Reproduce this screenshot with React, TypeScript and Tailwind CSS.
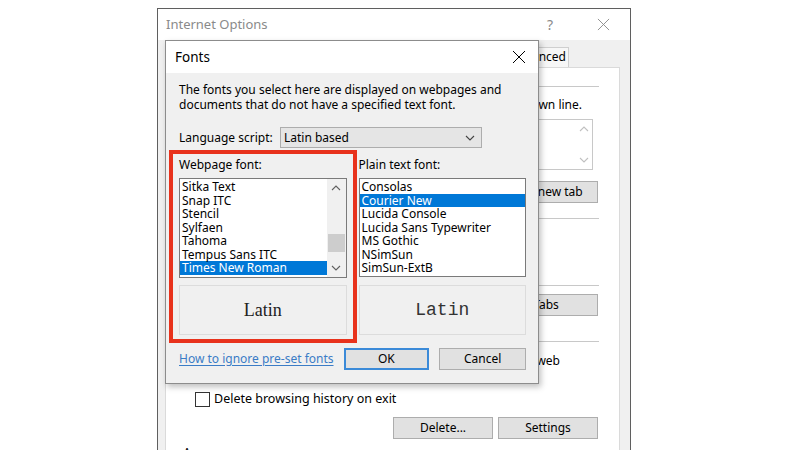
import React from 'react';

const ui = "font-['Noto_Sans',sans-serif]";

function Chevron({ dir = 'down', className = '' }: { dir?: 'up' | 'down'; className?: string }) {
  return (
    <svg width="10" height="6" viewBox="0 0 10 6" className={className}>
      <path
        d={dir === 'down' ? 'M1 1 L5 5 L9 1' : 'M1 5 L5 1 L9 5'}
        fill="none"
        stroke="currentColor"
        strokeWidth="1.1"
      />
    </svg>
  );
}

function CloseX({ size = 14, className = '' }: { size?: number; className?: string }) {
  return (
    <svg width={size} height={size} viewBox="0 0 14 14" className={className}>
      <path d="M1 1 L13 13 M13 1 L1 13" stroke="currentColor" strokeWidth="1" fill="none" />
    </svg>
  );
}

// group separator line (label sits under the Fonts dialog)
function GroupLine() {
  return (
    <div className="flex items-center h-[16px] pl-[90px] pr-[20px]">
      <div className="flex-1 h-px bg-[#c8c8c8]" />
    </div>
  );
}

function WinButton({ children, className = '' }: { children: React.ReactNode; className?: string }) {
  return (
    <div
      className={`flex items-center justify-center h-[22px] bg-[#e1e1e1] border border-[#adadad] text-[12px] text-black ${className}`}
    >
      {children}
    </div>
  );
}

const webFonts = ['Sitka Text', 'Snap ITC', 'Stencil', 'Sylfaen', 'Tahoma', 'Tempus Sans ITC', 'Times New Roman'];
const plainFonts = ['Consolas', 'Courier New', 'Lucida Console', 'Lucida Sans Typewriter', 'MS Gothic', 'NSimSun', 'SimSun-ExtB'];

function InternetOptions() {
  return (
    <div className="absolute left-[157px] top-[8px] w-[474px] h-[460px] border border-[#5f5f5f] bg-[#f0f0f0] flex flex-col">
      {/* title bar */}
      <div className="h-[31px] bg-white flex items-center pl-[8px] pr-[20px] shrink-0">
        <span className="text-[13px] text-[#8a8a8a] flex-1">Internet Options</span>
        <span className="text-[14px] text-[#8a8a8a] mr-[44px]">?</span>
        <CloseX size={13} className="text-[#8a8a8a]" />
      </div>
      {/* tabs */}
      <div className="h-[27px] flex items-end justify-end pr-[61px] shrink-0">
        <div className="h-[20px] pl-[3px] pr-[2px] bg-[#f7f7f7] border border-b-0 border-[#cfcfcf] text-[12px] leading-[18px] text-black">
          Advanced
        </div>
      </div>
      {/* tab page */}
      <div className="flex-1 ml-[7px] mr-[10px] bg-white border border-[#dadada] flex flex-col text-[12px] text-black">
        <div className="mt-[10px]">
          <GroupLine />
        </div>
        <div className="mt-[3px] h-[16px] flex justify-end pr-[37px] leading-[16px]">own line.</div>
        <div className="mt-[6px] h-[51px] ml-[20px] mr-[26px] border border-[#c8c8c8] flex justify-end">
          <div className="w-[17px] flex flex-col items-center justify-between py-[6px] text-[#c0c0c0]">
            <Chevron dir="up" />
            <Chevron dir="down" />
          </div>
        </div>
        <div className="mt-[11px] flex justify-end pr-[21px]">
          <WinButton className="w-[100px] h-[21px]">Use new tab</WinButton>
        </div>
        <div className="mt-[7px]">
          <GroupLine />
        </div>
        <div className="h-[51px]" />
        <GroupLine />
        <div className="mt-[1px] flex justify-end pr-[21px]">
          <WinButton className="w-[104px] h-[21px]">Tabs</WinButton>
        </div>
        <div className="mt-[17px]">
          <GroupLine />
        </div>
        <div className="mt-[4px] h-[16px] flex justify-end pr-[59px] leading-[16px]">and web</div>
        <div className="mt-[22px] h-[17px] flex items-center pl-[29px] gap-[4px]">
          <div className="w-[15px] h-[15px] border border-[#333] bg-white" />
          <span className="text-[12.5px]">Delete browsing history on exit</span>
        </div>
        <div className="mt-[9px] flex justify-end gap-[5px] pr-[21px]">
          <WinButton className="w-[100px] text-[12.5px]">Delete...</WinButton>
          <WinButton className="w-[100px] text-[12.5px]">Settings</WinButton>
        </div>
        <div className="mt-[5px] pl-[17px] text-[12.5px]">Appearance</div>
      </div>
    </div>
  );
}

function FontsDialog() {
  return (
    <div className="absolute left-[165px] top-[40px] w-[374px] h-[344px] border border-[#8c8c8c] bg-[#f0f0f0] shadow-[2px_3px_6px_rgba(0,0,0,0.25)] flex flex-col">
      <div className="h-[32px] bg-white flex items-center pl-[9px] pr-[12px] shrink-0">
        <span className="text-[13.5px] text-black flex-1">Fonts</span>
        <CloseX size={14} className="text-black" />
      </div>
      <div className="relative flex-1 px-[12px] pt-[9px] text-[12px] text-black">
        <p className="leading-[15px] pl-[1px]">
          The fonts you select here are displayed on webpages and
          <br />
          documents that do not have a specified text font.
        </p>
        <div className="mt-[15px] flex items-center h-[21px] pl-[1px]">
          <span className="w-[101px]">Language script:</span>
          <div className="w-[202px] h-[21px] bg-[#e5e5e5] border border-[#adadad] flex items-center pl-[3px] pr-[6px]">
            <span className="flex-1">Latin based</span>
            <Chevron className="text-[#444]" />
          </div>
        </div>
        <div className="mt-[9px] grid grid-cols-2 gap-x-[12px] pl-[1px]">
          <div className="flex flex-col">
            <span className="h-[16px] leading-[16px]">Webpage font:</span>
            <div className="mt-[5px] h-[100px] bg-white border border-[#7a7a7a] flex">
              <div className="flex-1 pt-[1px]">
                {webFonts.map((f, i) => (
                  <div
                    key={f}
                    className={`h-[13.5px] leading-[13.5px] pl-[2px] whitespace-nowrap ${
                      i === webFonts.length - 1 ? 'bg-[#0078d7] text-white' : ''
                    }`}
                  >
                    {f}
                  </div>
                ))}
              </div>
              <div className="w-[19px] bg-[#f0f0f0] flex flex-col items-center text-[#606060]">
                <div className="h-[18px] flex items-center">
                  <Chevron dir="up" />
                </div>
                <div className="mt-[37px] w-[17px] h-[18px] bg-[#cdcdcd]" />
                <div className="flex-1" />
                <div className="h-[18px] flex items-center">
                  <Chevron dir="down" />
                </div>
              </div>
            </div>
            <div className="mt-[7px] h-[50px] border border-[#dcdcdc] flex items-center justify-center">
              <span className="text-[18px] text-[#222] font-['Liberation_Serif',serif]">Latin</span>
            </div>
          </div>
          <div className="flex flex-col">
            <span className="h-[16px] leading-[16px]">Plain text font:</span>
            <div className="mt-[5px] h-[99px] bg-white border border-[#7a7a7a] pt-[1px]">
              {plainFonts.map((f, i) => (
                <div
                  key={f}
                  className={`h-[13.5px] leading-[13.5px] pl-[2px] whitespace-nowrap ${
                    i === 1 ? 'bg-[#0078d7] text-white' : ''
                  }`}
                >
                  {f}
                </div>
              ))}
            </div>
            <div className="mt-[8px] h-[50px] border border-[#dcdcdc] flex items-center justify-center">
              <span className="text-[18px] text-[#333] font-['Liberation_Mono',monospace]">Latin</span>
            </div>
          </div>
        </div>
        <div className="mt-[13px] flex items-center pl-[1px]">
          <a className="w-[165px] text-[#3b7cc6] underline underline-offset-2">How to ignore pre-set fonts</a>
          <div className="w-[86px] h-[22px] bg-[#e1e1e1] border-2 border-[#3b8ad8] flex items-center justify-center">OK</div>
          <div className="ml-[10px] w-[87px] h-[22px] bg-[#e1e1e1] border border-[#adadad] flex items-center justify-center">Cancel</div>
        </div>
        {/* highlight */}
        <div className="absolute left-[3px] top-[77px] w-[188px] h-[193px] border-[4px] border-[#e8321c]" />
      </div>
    </div>
  );
}

export default function App() {
  return (
    <div className={`relative w-[800px] h-[450px] bg-white overflow-hidden ${ui}`}>
      <InternetOptions />
      <FontsDialog />
    </div>
  );
}
